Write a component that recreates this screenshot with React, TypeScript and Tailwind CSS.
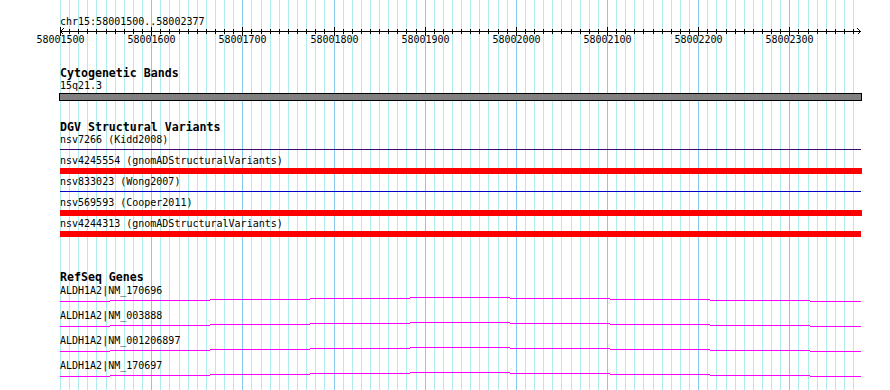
const START = 58001500;
const PX_PER_10BP = 9.117;
const LEFT = 60;
const RIGHT = 861;

const gridX = (i: number) => Math.round(LEFT + i * PX_PER_10BP);

const dgvFeatures = [
  { label: "nsv7266 (Kidd2008)", kind: "line", color: "#3d0a6e", width: 801 },
  { label: "nsv4245554 (gnomADStructuralVariants)", kind: "bar", color: "#ff0000", width: 802 },
  { label: "nsv833023 (Wong2007)", kind: "line", color: "#0000c8", width: 801 },
  { label: "nsv569593 (Cooper2011)", kind: "bar", color: "#ff0000", width: 802 },
  { label: "nsv4244313 (gnomADStructuralVariants)", kind: "bar", color: "#ff0000", width: 801 },
];

const transcripts = [
  "ALDH1A2|NM_170696",
  "ALDH1A2|NM_003888",
  "ALDH1A2|NM_001206897",
  "ALDH1A2|NM_170697",
];

// intron line steps: [x0, x1, y offset from base]
const geneSegments: [number, number, number][] = [
  [60, 110, 0],
  [110, 210, -1],
  [210, 310, -2],
  [310, 410, -3],
  [410, 510, -4],
  [510, 610, -3],
  [610, 710, -2],
  [710, 810, -1],
  [810, 861, 0],
];

function GridLines() {
  return (
    <svg className="absolute inset-0" width={890} height={390} shapeRendering="crispEdges">
      {Array.from({ length: 88 }, (_, i) => (
        <rect
          key={i}
          x={gridX(i)}
          y={0}
          width={1}
          height={390}
          fill={i > 0 && i % 10 === 0 ? "#86c8ee" : "#b0ecee"}
        />
      ))}
    </svg>
  );
}

function Ruler() {
  return (
    <svg width={890} height={19} className="block" shapeRendering="crispEdges">
      <rect x={LEFT} y={4} width={RIGHT - LEFT} height={1} fill="#000" />
      {Array.from({ length: 88 }, (_, i) => {
        const major = i % 10 === 0;
        return (
          <rect
            key={i}
            x={gridX(i)}
            y={major ? 0 : 2}
            width={1}
            height={major ? 9 : 5}
            fill="#000"
          />
        );
      })}
      <polyline points="63.5,1.5 60.5,4.5 63.5,7.5" fill="none" stroke="#000" />
      <polyline points="857.5,1.5 860.5,4.5 857.5,7.5" fill="none" stroke="#000" />
      {Array.from({ length: 9 }, (_, k) => (
        <text
          key={k}
          x={gridX(k * 10) + 0.5}
          y={16}
          textAnchor="middle"
          fontSize={10}
          fill="#000"
          style={{ fontFamily: "'DejaVu Sans Mono', monospace" }}
        >
          {START + k * 100}
        </text>
      ))}
    </svg>
  );
}

function TrackTitle({ children }: { children: string }) {
  return <h2 className="text-[11.6px] font-bold leading-[13px]">{children}</h2>;
}

function GeneLine() {
  return (
    <svg width={890} height={6} className="block -ml-[60px]" shapeRendering="crispEdges">
      {geneSegments.map(([x0, x1, dy]) => (
        <rect key={x0} x={x0} y={4 + dy} width={x1 - x0} height={1} fill="#ff00ff" />
      ))}
    </svg>
  );
}

export default function App() {
  return (
    <div className="relative h-[390px] w-[890px] overflow-hidden bg-white font-['DejaVu_Sans_Mono',monospace] text-[10px] leading-[12px] text-black">
      <GridLines />

      <div className="relative pt-[17px]">
        <div className="pl-[60px] leading-[10px]">chr15:58001500..58002377</div>
        <Ruler />

        <section className="mt-[21px] pl-[60px]">
          <TrackTitle>Cytogenetic Bands</TrackTitle>
          <div>15q21.3</div>
          <div className="-ml-px mt-px h-[8px] w-[803px] border border-black bg-[#808080]" />
        </section>

        <section className="mt-[20px] pl-[60px]">
          <TrackTitle>DGV Structural Variants</TrackTitle>
          {dgvFeatures.map((f) => (
            <div key={f.label} className="mb-[2px]">
              <div className="whitespace-pre">{f.label}</div>
              <div className="mt-px h-[6px]">
                {f.kind === "bar" ? (
                  <div className="h-[6px]" style={{ width: f.width, background: f.color }} />
                ) : (
                  <div className="pt-[2px]">
                    <div className="h-px" style={{ width: f.width, background: f.color }} />
                  </div>
                )}
              </div>
            </div>
          ))}
        </section>

        <section className="mt-[34px] pl-[60px]">
          <TrackTitle>RefSeq Genes</TrackTitle>
          <div className="pt-px">
            {transcripts.map((t) => (
              <div key={t} className="mb-[7px]">
                <div>{t}</div>
                <GeneLine />
              </div>
            ))}
          </div>
        </section>
      </div>
    </div>
  );
}
